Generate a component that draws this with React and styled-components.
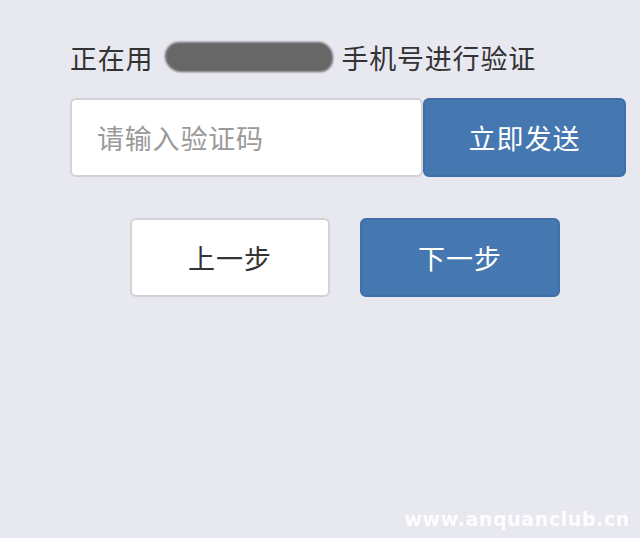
import React from "react";
import styled, { createGlobalStyle } from "styled-components";

const Global = createGlobalStyle`
  html, body {
    margin: 0;
    padding: 0;
    background: #e8e8f1;
    font-family: "Noto Sans CJK SC", "Noto Sans", sans-serif;
  }
`;

const Page = styled("div")`
  position: relative;
  width: 640px;
  height: 538px;
  background: #e8e8f1;
  overflow: hidden;
`;

const Content = styled("div")`
  padding: 38px 14px 0 70px;
  display: flex;
  flex-direction: column;
`;

const Notice = styled("div")`
  display: flex;
  align-items: center;
  height: 38px;
  font-size: 27px;
  color: #333;
  letter-spacing: 0.8px;
`;

const Redacted = styled("span")`
  display: inline-block;
  width: 168px;
  height: 30px;
  margin: 0 8px 0 12px;
  border-radius: 15px 16px 14px 17px;
  background: #676767;
  filter: blur(0.8px);
`;

const CodeRow = styled("div")`
  display: flex;
  margin-top: 22px;
  height: 79px;
`;

const CodeInput = styled("input")`
  box-sizing: border-box;
  width: 353px;
  height: 79px;
  border: 2px solid #d2d2d6;
  border-radius: 6px;
  padding: 0 0 0 25px;
  font-family: "Noto Sans CJK SC", sans-serif;
  font-size: 27px;
  letter-spacing: 0.8px;
  color: #333;
  background: #fff;
  outline: none;
  &::placeholder {
    color: #9a9a9a;
  }
`;

const Button = styled("button")`
  box-sizing: border-box;
  width: ${(p) => p.$w || 200}px;
  height: 79px;
  border-radius: 6px;
  border: 2px solid ${(p) => (p.$primary ? "#3f6fa6" : "#d2d2d6")};
  background: ${(p) => (p.$primary ? "#4577b0" : "#fff")};
  color: ${(p) => (p.$primary ? "#fff" : "#333")};
  font-family: "Noto Sans CJK SC", sans-serif;
  font-size: 27px;
  letter-spacing: 1px;
  cursor: pointer;
  padding: 0;
`;

const StepRow = styled("div")`
  display: flex;
  gap: 30px;
  margin-top: 41px;
  padding-left: 60px;
`;

const Watermark = styled("div")`
  position: absolute;
  right: 10px;
  bottom: 8px;
  font-family: "DejaVu Sans", sans-serif;
  font-weight: bold;
  font-size: 19px;
  letter-spacing: 0.6px;
  color: #ffffff;
  opacity: 0.95;
`;

export default function App() {
  return (
    <Page>
      <Global />
      <Content>
        <Notice>
          正在用
          <Redacted />
          手机号进行验证
        </Notice>
        <CodeRow>
          <CodeInput placeholder="请输入验证码" />
          <Button $primary $w={203}>
            立即发送
          </Button>
        </CodeRow>
        <StepRow>
          <Button>上一步</Button>
          <Button $primary>下一步</Button>
        </StepRow>
      </Content>
      <Watermark>www.anquanclub.cn</Watermark>
    </Page>
  );
}
